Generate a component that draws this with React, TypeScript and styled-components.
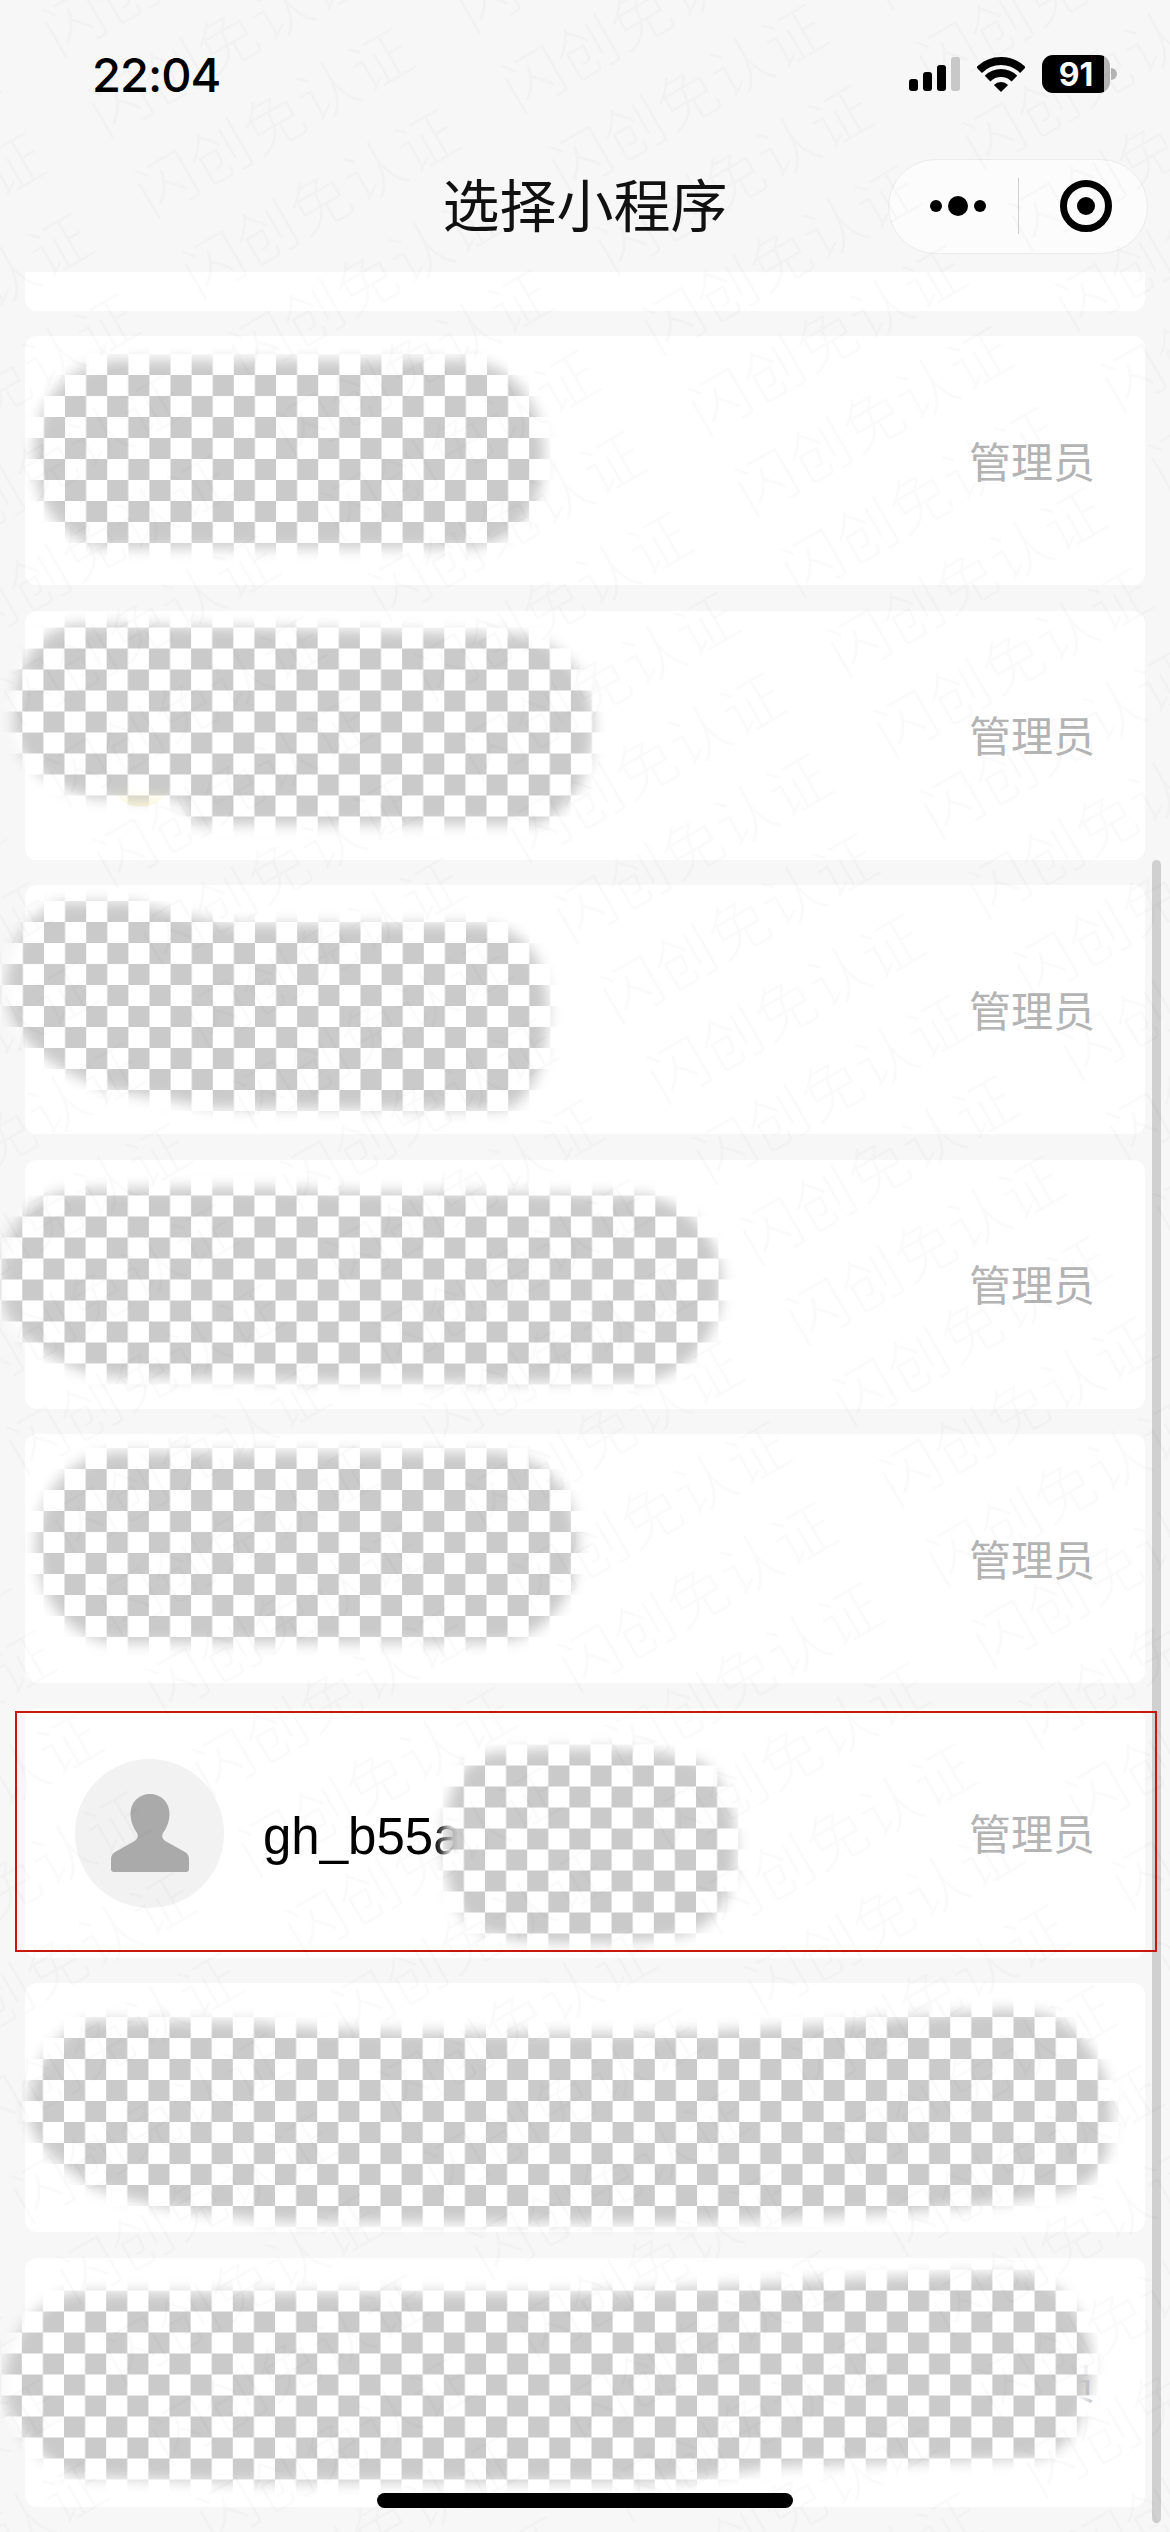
import styled, { createGlobalStyle } from 'styled-components';

const CJK = '"Noto Sans CJK SC", "Noto Sans", sans-serif';

const GlobalStyle = createGlobalStyle`
  html, body {
    margin: 0;
    padding: 0;
    background: #f7f7f7;
  }
`;

const Page = styled.div`
  position: relative;
  width: 1170px;
  height: 2532px;
  overflow: hidden;
  background: #f7f7f7;
  font-family: "Liberation Sans", ${CJK};
`;

const StatusBar = styled.div`
  height: 148px;
  padding: 0 60px 0 92px;
  box-sizing: border-box;
  display: flex;
  align-items: center;
  gap: 17px;
`;

const Time = styled.div`
  margin-right: auto;
  font-family: Inter, sans-serif;
  font-size: 47px;
  font-weight: 500;
  letter-spacing: -1px;
  color: #000;
`;

const Battery = styled.div`
  position: relative;
  width: 68px;
  height: 38px;
  border-radius: 11px;
  background: linear-gradient(90deg, #000 91%, #b4b4b4 91%);
  display: flex;
  align-items: center;
  justify-content: center;
  font-family: Inter, sans-serif;
  font-size: 32px;
  font-weight: 700;
  color: #fff;

  &::after {
    content: '';
    position: absolute;
    right: -7px;
    top: 13px;
    width: 6px;
    height: 12px;
    border-radius: 0 6px 6px 0;
    background: #b4b4b4;
  }
`;

const NavBar = styled.div`
  height: 116px;
  margin-bottom: 8px;
  display: grid;
  grid-template-columns: 1fr auto 1fr;
  align-items: center;
`;

const Title = styled.h1`
  grid-column: 2;
  margin: 0;
  padding-bottom: 8px;
  font-family: ${CJK};
  font-size: 57px;
  font-weight: 400;
  color: #111;
`;

const Capsule = styled.div`
  justify-self: end;
  width: 260px;
  height: 95px;
  margin-right: 22px;
  box-sizing: border-box;
  border: 1px solid #ebebeb;
  border-radius: 48px;
  background: rgba(255, 255, 255, 0.6);
  display: grid;
  grid-template-columns: 129px 1px 1fr;
  align-items: center;
`;

const CapsuleSide = styled.div`
  display: flex;
  align-items: center;
  justify-content: center;
  padding-left: ${(p: { $pad: number }) => p.$pad}px;
`;

const CapsuleDivider = styled.div`
  height: 56px;
  background: #cfcfcf;
`;

const List = styled.div`
  padding: 0 25px;
  display: flex;
  flex-direction: column;
  gap: 25.5px;
`;

const ClippedCard = styled.div`
  height: 38.5px;
  border-radius: 0 0 12px 12px;
  background: #fff;
`;

const Card = styled.div`
  position: relative;
  height: 249px;
  padding: 0 50px 0 50px;
  box-sizing: border-box;
  border-radius: 12px;
  background: #fff;
  display: flex;
  align-items: center;
`;

const Avatar = styled.div`
  width: 149px;
  height: 149px;
  margin-right: 39px;
  border-radius: 50%;
  background: #f2f2f2;
  display: flex;
  align-items: center;
  justify-content: center;
`;

const AppName = styled.div`
  padding-top: 6px;
  font-size: 51px;
  color: #000;
`;

const Role = styled.div`
  margin-left: auto;
  padding-bottom: 3px;
  font-family: ${CJK};
  font-size: 42px;
  font-weight: 400;
  color: #b4b4b4;
`;

const Highlight = styled.div`
  position: absolute;
  left: -10px;
  right: -12px;
  top: 2px;
  bottom: 6px;
  border: 2px solid #c8170d;
  pointer-events: none;
`;

const MosaicSvg = styled.svg`
  position: absolute;
  left: -25px;
  top: -40px;
  overflow: visible;
  pointer-events: none;
`;

const Scrollbar = styled.div`
  position: absolute;
  left: 1152px;
  top: 860px;
  width: 9px;
  height: 1663px;
  border-radius: 5px;
  background: #d0d0d0;
`;

const HomeIndicator = styled.div`
  position: absolute;
  left: 377px;
  top: 2493px;
  width: 416px;
  height: 15px;
  border-radius: 8px;
  background: #000;
`;

const Watermark = styled.div`
  position: absolute;
  left: 0;
  top: 0;
  width: 2700px;
  transform-origin: 0 0;
  transform: rotate(-30deg) translate(-1459px, -87px);
  font-family: ${CJK};
  font-size: 61px;
  font-weight: 300;
  letter-spacing: 0.7px;
  line-height: 93px;
  white-space: nowrap;
  color: rgba(0, 0, 0, 0.018);
  pointer-events: none;
`;

type Blob = {
  top: number;
  cell: [number, number];
  path: string;
  smear?: boolean;
};

// paths are in page coordinates, the svg viewBox shifts them into the card
const blobs: Blob[] = [
  {
    top: 336,
    cell: [65, 396],
    path: 'M115 360 L465 360 C518 364 544 410 544 455 C544 505 518 546 465 548 L115 548 C62 546 34 505 34 455 C34 410 62 364 115 360 Z',
  },
  {
    top: 610.5,
    cell: [64.5, 648],
    path: 'M72 624 L210 626 L518 634 C562 638 594 680 594 725 C594 778 562 822 530 824 L192 824 L185 800 L95 798 C44 785 14 760 14 720 C14 670 32 632 72 624 Z',
    smear: true,
  },
  {
    top: 885,
    cell: [44, 922],
    path: 'M62 902 L130 902 L225 924 L480 924 C528 927 548 965 548 1010 C548 1065 528 1108 500 1110 L215 1108 L110 1090 C62 1073 8 1045 6 990 C6 950 27 912 62 902 Z',
  },
  {
    top: 1159.5,
    cell: [64.5, 1195],
    path: 'M60 1192 C70 1187 300 1185 320 1190 L640 1194 C692 1202 722 1240 722 1282 C722 1338 684 1378 640 1381 L360 1382 L100 1376 C40 1358 0 1330 0 1285 C0 1240 22 1202 60 1192 Z',
  },
  {
    top: 1434,
    cell: [64.5, 1490],
    path: 'M115 1452 L495 1452 C552 1457 578 1500 578 1545 C578 1595 548 1638 495 1643 L115 1643 C66 1638 36 1595 36 1545 C36 1500 66 1457 115 1452 Z',
  },
  {
    top: 1708.5,
    cell: [485, 1786],
    path: 'M480 1755 C525 1744 680 1744 706 1765 C730 1790 736 1820 736 1850 C736 1890 716 1923 688 1933 C640 1946 515 1946 480 1930 C455 1915 444 1885 444 1845 C444 1800 455 1770 480 1755 Z',
  },
  {
    top: 1983,
    cell: [64, 2038],
    path: 'M90 2020 L260 2022 C300 2034 600 2034 680 2032 C780 2030 900 2017 1000 2010 C1058 2007 1078 2032 1092 2052 C1110 2080 1113 2100 1111 2130 C1108 2170 1088 2188 1060 2193 C1000 2208 800 2223 620 2223 L280 2222 C200 2213 120 2203 87 2183 C54 2160 28 2140 28 2110 C28 2070 54 2032 90 2020 Z',
  },
  {
    top: 2257.5,
    cell: [64, 2290],
    path: 'M72 2292 L600 2292 C700 2287 850 2277 970 2273 L1033 2274 C1066 2287 1092 2320 1092 2365 C1092 2410 1071 2448 1040 2458 L780 2466 L670 2482 L225 2482 L72 2476 C34 2455 4 2420 4 2385 C4 2340 34 2302 72 2292 Z',
  },
];

const Mosaic = ({ blob, id }: { blob: Blob; id: number }) => {
  const y0 = blob.top - 40;
  return (
    <MosaicSvg width={1170} height={330} viewBox={`0 ${y0} 1170 330`}>
      <defs>
        <pattern
          id={`checker${id}`}
          patternUnits='userSpaceOnUse'
          x={blob.cell[0]}
          y={blob.cell[1]}
          width={42.2}
          height={42}
        >
          <rect width={42.2} height={42} fill='#fff' />
          <rect width={21.1} height={21} fill='#cacaca' />
          <rect x={21.1} y={21} width={21.1} height={21} fill='#cacaca' />
        </pattern>
        <filter id={`soft${id}`} x='-20%' y='-20%' width='140%' height='140%'>
          <feGaussianBlur stdDeviation={7} />
        </filter>
        <mask id={`shape${id}`} maskUnits='userSpaceOnUse' x={-40} y={y0} width={1250} height={330}>
          <path d={blob.path} fill='#fff' filter={`url(#soft${id})`} />
        </mask>
      </defs>
      {blob.smear && <ellipse cx={141} cy={766} rx={36} ry={40} fill='#f9f6d5' />}
      <rect x={-40} y={y0} width={1250} height={330} fill={`url(#checker${id})`} mask={`url(#shape${id})`} />
    </MosaicSvg>
  );
};

const SignalIcon = () => (
  <svg width={51} height={34} viewBox='0 0 51 34'>
    <rect x={0} y={22} width={9} height={12} rx={3} fill='#000' />
    <rect x={14} y={15} width={9} height={19} rx={3} fill='#000' />
    <rect x={28} y={8} width={9} height={26} rx={3} fill='#000' />
    <rect x={42} y={0} width={9} height={34} rx={3} fill='#c8c8c8' />
  </svg>
);

const WifiIcon = () => (
  <svg width={48} height={36} viewBox='0 0 48 36'>
    <path d='M2.1 14.1 A31 31 0 0 1 45.9 14.1' fill='none' stroke='#000' strokeWidth={8} />
    <path d='M10.6 22.6 A19 19 0 0 1 37.4 22.6' fill='none' stroke='#000' strokeWidth={8} />
    <path d='M24 36 L16.9 28.9 A10 10 0 0 1 31.1 28.9 Z' fill='#000' />
  </svg>
);

const DotsIcon = () => (
  <svg width={56} height={20} viewBox='0 0 56 20'>
    <circle cx={6} cy={10} r={6} fill='#000' />
    <circle cx={28} cy={10} r={10} fill='#000' />
    <circle cx={50} cy={10} r={6} fill='#000' />
  </svg>
);

const TargetIcon = () => (
  <svg width={52} height={52} viewBox='0 0 52 52'>
    <circle cx={26} cy={26} r={22.5} fill='none' stroke='#000' strokeWidth={7} />
    <circle cx={26} cy={26} r={9} fill='#000' />
  </svg>
);

const PersonIcon = () => (
  <svg width={78} height={78} viewBox='0 0 78 78'>
    <path
      d='M39 0 C50 0 58.5 8 58.5 20 C58.5 28 55 35 52 39 C50 43 52 46 56 48 L74 58 C77 60 78 62 78 65 L78 75 C78 77 77 78 75 78 L3 78 C1 78 0 77 0 75 L0 65 C0 62 1 60 4 58 L22 48 C26 46 28 43 26 39 C23 35 19.5 28 19.5 20 C19.5 8 28 0 39 0 Z'
      fill='#aaa'
    />
  </svg>
);

const watermarkLine = Array(8).fill('闪创免认证').join('　');

const App = () => {
  return (
    <Page>
      <GlobalStyle />
      <Scrollbar />
      <StatusBar>
        <Time>22:04</Time>
        <SignalIcon />
        <WifiIcon />
        <Battery>91</Battery>
      </StatusBar>

      <NavBar>
        <Title>选择小程序</Title>
        <Capsule>
          <CapsuleSide $pad={8}>
            <DotsIcon />
          </CapsuleSide>
          <CapsuleDivider />
          <CapsuleSide $pad={6}>
            <TargetIcon />
          </CapsuleSide>
        </Capsule>
      </NavBar>

      <List>
        <ClippedCard />
        {blobs.map((blob, i) => (
          <Card key={blob.top}>
            {i === 5 && (
              <>
                <Avatar>
                  <PersonIcon />
                </Avatar>
                <AppName>gh_b55a</AppName>
              </>
            )}
            <Role>管理员</Role>
            <Mosaic blob={blob} id={i} />
            {i === 5 && <Highlight />}
          </Card>
        ))}
      </List>

      <HomeIndicator />
      <Watermark>
        {Array.from({ length: 32 }, (_, i) => (
          <div key={i}>{watermarkLine}</div>
        ))}
      </Watermark>
    </Page>
  );
};

export default App;
